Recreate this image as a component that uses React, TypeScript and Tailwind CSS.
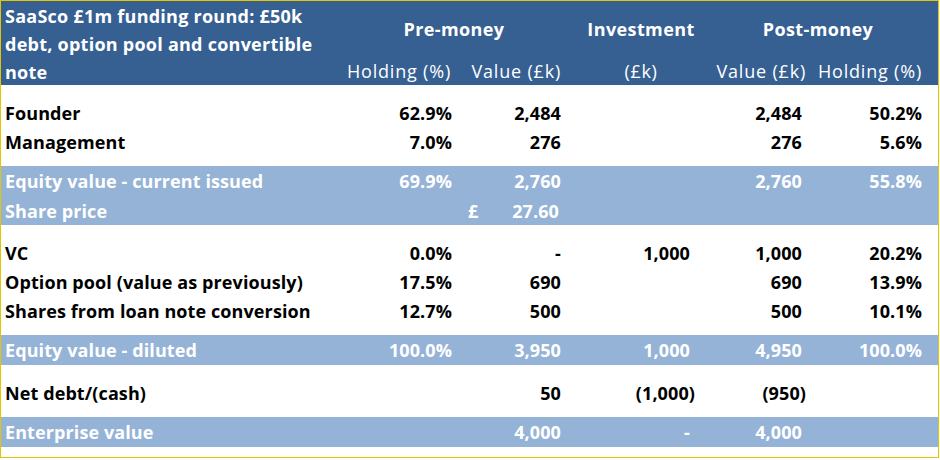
import React from 'react';

type Row = {
  label: string;
  cells: string[];
  band?: boolean;
  h: string;
};

const grid = 'grid grid-cols-[342px_112px_110px_130px_111px_119px_12px]';
const pads = ['pr-[3px]', 'pr-[4px]', 'pr-[5px]', 'pr-[4px]', 'pr-[3px]'];

const top: Row[] = [
  { label: 'Founder', cells: ['62.9%', '2,484', '', '2,484', '50.2%'], h: 'h-[29px]' },
  { label: 'Management', cells: ['7.0%', '276', '', '276', '5.6%'], h: 'h-[29px]' },
];

const middle: Row[] = [
  { label: 'VC', cells: ['0.0%', '-', '1,000', '1,000', '20.2%'], h: 'h-[29px]' },
  { label: 'Option pool (value as previously)', cells: ['17.5%', '690', '', '690', '13.9%'], h: 'h-[29px]' },
  { label: 'Shares from loan note conversion', cells: ['12.7%', '500', '', '500', '10.1%'], h: 'h-[29px]' },
];

function Line({ row }: { row: Row }) {
  return (
    <div className={`${grid} ${row.h} items-center ${row.band ? 'bg-[#95b3d7] text-white' : 'text-black'}`}>
      <div className="pl-[4px] whitespace-nowrap">{row.label}</div>
      {row.cells.map((c, i) => (
        <div key={i} className={`text-right whitespace-nowrap ${c.endsWith(')') ? 'pr-0' : pads[i]}`}>
          {c}
        </div>
      ))}
      <div />
    </div>
  );
}

export default function App() {
  return (
    <div className="w-[939px] h-[458px] border border-[#e3c600] bg-white font-['Open_Sans',sans-serif] text-[18px] font-bold leading-none tracking-[0.1px]">
      {/* header */}
      <div className={`${grid} grid-rows-[56px_28px] bg-[#366092] text-white tracking-[0.4px]`}>
        <div className="row-span-2 pl-[4px] pt-[1px] leading-[28px] whitespace-nowrap tracking-[0.25px]">
          SaaSco £1m funding round: £50k
          <br />
          debt, option pool and convertible
          <br />
          note
        </div>
        <div className="col-span-2 flex items-center justify-center">Pre-money</div>
        <div className="flex items-center justify-center pl-[22px]">Investment</div>
        <div className="col-span-2 flex items-center justify-center pl-[16px]">Post-money</div>
        <div />
        <div className="flex items-center justify-end pr-[4px] font-normal whitespace-nowrap tracking-[0.8px]">Holding (%)</div>
        <div className="flex items-center justify-end pr-[4px] font-normal whitespace-nowrap tracking-[0.8px]">Value (£k)</div>
        <div className="flex items-center justify-center pl-[22px] font-normal tracking-[0.6px]">(£k)</div>
        <div className="flex items-center justify-end pr-0 font-normal whitespace-nowrap tracking-[0.8px]">Value (£k)</div>
        <div className="flex items-center justify-end pr-[3px] font-normal whitespace-nowrap tracking-[0.8px]">Holding (%)</div>
        <div />
      </div>

      <div className="h-[13px]" />
      {top.map((r) => (
        <Line key={r.label} row={r} />
      ))}
      <div className="h-[10px]" />

      <Line row={{ label: 'Equity value - current issued', cells: ['69.9%', '2,760', '', '2,760', '55.8%'], band: true, h: 'h-[30px]' }} />
      <div className={`${grid} h-[29px] items-center bg-[#95b3d7] text-white`}>
        <div className="pl-[4px]">Share price</div>
        <div />
        <div className="flex justify-between pl-[13px] pr-[6px]">
          <span>£</span>
          <span>27.60</span>
        </div>
        <div />
        <div />
        <div />
        <div />
      </div>

      <div className="h-[13px]" />
      {middle.map((r) => (
        <Line key={r.label} row={r} />
      ))}
      <div className="h-[10px]" />

      <Line row={{ label: 'Equity value - diluted', cells: ['100.0%', '3,950', '1,000', '4,950', '100.0%'], band: true, h: 'h-[30px]' }} />
      <div className="h-[13px]" />
      <Line row={{ label: 'Net debt/(cash)', cells: ['', '50', '(1,000)', '(950)', ''], h: 'h-[29px]' }} />
      <div className="h-[10px]" />
      <Line row={{ label: 'Enterprise value', cells: ['', '4,000', '-', '4,000', ''], band: true, h: 'h-[30px]' }} />
    </div>
  );
}
